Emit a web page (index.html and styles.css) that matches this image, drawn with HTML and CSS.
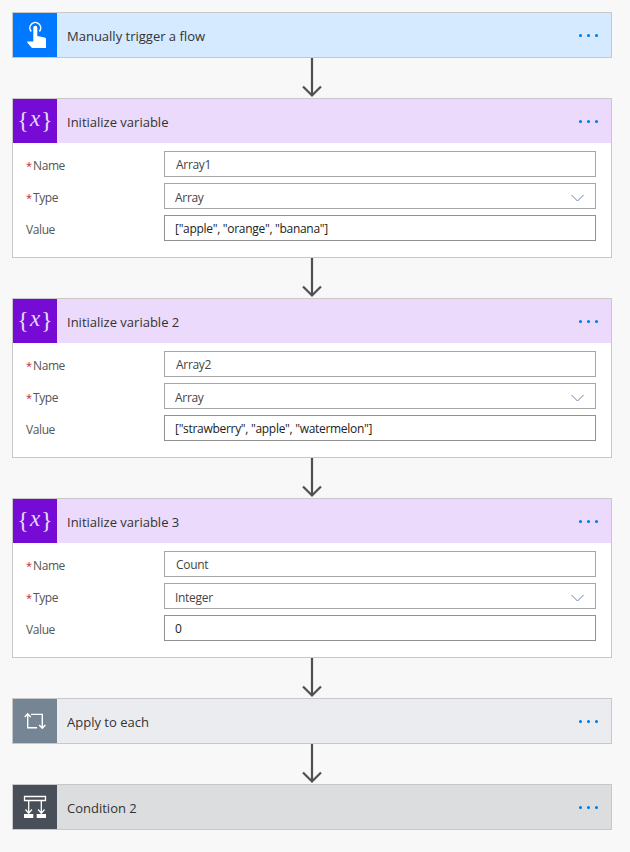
FILE: index.html
```html
<!DOCTYPE html>
<html lang="en">

<head>
    <meta charset="UTF-8">
    <title>Flow</title>
    <link rel="stylesheet" href="styles.css">
</head>

<body>
    <div class="flow">

        <div class="card trigger">
            <div class="head">
                <div class="icon">
                    <svg width="44" height="44" viewBox="0 0 44 44">
                        <path d="M18.2 18.4a5.4 5.4 0 1 1 8.2 0" fill="none" stroke="#fff" stroke-width="1.6" />
                        <path d="M20.3 14.8a2 2 0 0 1 4 0V23L31.5 24.5c.9.2 1.5.8 1.5 1.7V35H19L14.2 29.5V28.6H20.3z" fill="#fff" />
                    </svg>
                </div>
                <span class="title">Manually trigger a flow</span>
                <div class="dots"><span></span><span></span><span></span></div>
            </div>
        </div>
        <div class="line"><svg width="20" height="40" viewBox="0 0 20 40"><path d="M10 0V38M1 28.5L10 37.5L19 28.5" /></svg></div>

        <div class="card variable">
            <div class="head">
                <div class="icon"><span class="curly">{</span><span class="ex">x</span><span class="curly">}</span></div>
                <span class="title">Initialize variable</span>
                <div class="dots"><span></span><span></span><span></span></div>
            </div>
            <div class="body">
                <div class="row">
                    <label><i>*</i>Name</label>
                    <div class="field">Array1</div>
                </div>
                <div class="row">
                    <label><i>*</i>Type</label>
                    <div class="field select">Array
                        <svg class="chev" width="13" height="8" viewBox="0 0 13 8"><path d="M.5 1L6.5 7L12.5 1" /></svg>
                    </div>
                </div>
                <div class="row">
                    <label>Value</label>
                    <div class="field dark">["apple", "orange", "banana"]</div>
                </div>
            </div>
        </div>
        <div class="line"><svg width="20" height="40" viewBox="0 0 20 40"><path d="M10 0V38M1 28.5L10 37.5L19 28.5" /></svg></div>

        <div class="card variable">
            <div class="head">
                <div class="icon"><span class="curly">{</span><span class="ex">x</span><span class="curly">}</span></div>
                <span class="title">Initialize variable 2</span>
                <div class="dots"><span></span><span></span><span></span></div>
            </div>
            <div class="body">
                <div class="row">
                    <label><i>*</i>Name</label>
                    <div class="field">Array2</div>
                </div>
                <div class="row">
                    <label><i>*</i>Type</label>
                    <div class="field select">Array
                        <svg class="chev" width="13" height="8" viewBox="0 0 13 8"><path d="M.5 1L6.5 7L12.5 1" /></svg>
                    </div>
                </div>
                <div class="row">
                    <label>Value</label>
                    <div class="field dark">["strawberry", "apple", "watermelon"]</div>
                </div>
            </div>
        </div>
        <div class="line"><svg width="20" height="40" viewBox="0 0 20 40"><path d="M10 0V38M1 28.5L10 37.5L19 28.5" /></svg></div>

        <div class="card variable">
            <div class="head">
                <div class="icon"><span class="curly">{</span><span class="ex">x</span><span class="curly">}</span></div>
                <span class="title">Initialize variable 3</span>
                <div class="dots"><span></span><span></span><span></span></div>
            </div>
            <div class="body">
                <div class="row">
                    <label><i>*</i>Name</label>
                    <div class="field">Count</div>
                </div>
                <div class="row">
                    <label><i>*</i>Type</label>
                    <div class="field select">Integer
                        <svg class="chev" width="13" height="8" viewBox="0 0 13 8"><path d="M.5 1L6.5 7L12.5 1" /></svg>
                    </div>
                </div>
                <div class="row">
                    <label>Value</label>
                    <div class="field dark">0</div>
                </div>
            </div>
        </div>
        <div class="line"><svg width="20" height="40" viewBox="0 0 20 40"><path d="M10 0V38M1 28.5L10 37.5L19 28.5" /></svg></div>

        <div class="card loop">
            <div class="head">
                <div class="icon">
                    <svg width="44" height="44" viewBox="0 0 44 44" fill="none" stroke="#fff" stroke-width="1.4">
                        <path d="M11.7 18L14.7 14.8L17.7 18M14.7 15V28.7H24" />
                        <path d="M18 15.4H29.3V29M26.2 26L29.3 29.2L32.4 26" />
                    </svg>
                </div>
                <span class="title">Apply to each</span>
                <div class="dots"><span></span><span></span><span></span></div>
            </div>
        </div>
        <div class="line"><svg width="20" height="40" viewBox="0 0 20 40"><path d="M10 0V38M1 28.5L10 37.5L19 28.5" /></svg></div>

        <div class="card condition">
            <div class="head">
                <div class="icon">
                    <svg width="44" height="44" viewBox="0 0 44 44">
                        <path d="M11.5 11.5H32.5V15.5H11.5ZM15.7 16V28M12.5 24.5L15.7 28.3L18.9 24.5M28.3 16V28M25.1 24.5L28.3 28.3L31.5 24.5" fill="none" stroke="#fff" stroke-width="1.3" />
                        <path d="M11 29H20.3V33H11ZM23.7 29H33V33H23.7Z" fill="#fff" />
                    </svg>
                </div>
                <span class="title">Condition 2</span>
                <div class="dots"><span></span><span></span><span></span></div>
            </div>
        </div>

    </div>
</body>

</html>
```

FILE: styles.css
```css
body {
    margin: 0;
    background-color: rgb(248, 248, 248);
    font-family: "Open Sans", sans-serif;
    color: rgb(51, 51, 51);
}

.flow {
    width: 600px;
    padding: 12px 0 22px 12px;
}

.card {
    border: 1px solid rgb(200, 200, 200);
    background-color: white;
}

.head {
    display: flex;
    align-items: center;
    height: 44px;
}

.icon {
    display: flex;
    align-items: center;
    justify-content: center;
    width: 44px;
    height: 44px;
    color: white;
}

.title {
    margin: 2px 0 0 10px;
    font-size: 13px;
    flex: 1;
}

.dots {
    display: flex;
    gap: 5px;
    margin: 1px 13px 0 0;
}

.dots span {
    width: 3px;
    height: 3px;
    border-radius: 50%;
    background-color: rgb(0, 120, 215);
}

.trigger .head {
    background-color: rgb(213, 233, 255);
}

.trigger .icon {
    background-color: rgb(0, 120, 255);
}

.variable .head {
    background-color: rgb(235, 218, 251);
}

.variable .icon {
    background-color: rgb(119, 11, 214);
}

.loop .head {
    background-color: rgb(235, 236, 239);
}

.loop .icon {
    background-color: rgb(118, 133, 148);
}

.condition .head {
    background-color: rgb(220, 221, 222);
}

.condition .icon {
    background-color: rgb(72, 79, 88);
}

.curly {
    font-family: "Liberation Serif", serif;
    font-size: 24px;
    line-height: 1;
    margin-top: -3px;
    color: rgba(255, 255, 255, 0.85);
}

.ex {
    font-family: "Liberation Serif", serif;
    font-style: italic;
    font-size: 23px;
    line-height: 1;
    margin: -6px 1px 0 1px;
    color: rgba(255, 255, 255, 0.85);
}

.body {
    display: flex;
    flex-direction: column;
    gap: 6px;
    padding: 8px 15px 16px 13px;
}

.row {
    display: flex;
    align-items: center;
}

label {
    width: 138px;
    margin-top: 2px;
    font-size: 12px;
    letter-spacing: -0.4px;
    color: rgb(85, 85, 85);
}

label i {
    display: inline-block;
    width: 7px;
    font-style: normal;
    font-size: 11px;
    color: rgb(200, 40, 40);
}

.field {
    position: relative;
    flex: 1;
    height: 26px;
    box-sizing: border-box;
    border: 1px solid rgb(166, 166, 166);
    padding-left: 11px;
    font-size: 12px;
    letter-spacing: -0.3px;
    line-height: 26px;
    color: rgb(68, 68, 68);
}

.field.select {
    padding-left: 10px;
    line-height: 27px;
}

.field.dark {
    padding-left: 10px;
    border-color: rgb(145, 145, 145);
    color: rgb(34, 34, 34);
}

.chev {
    position: absolute;
    right: 11px;
    top: 10px;
    fill: none;
    stroke: rgb(105, 135, 170);
    stroke-width: 1;
}

.line {
    display: flex;
    justify-content: center;
    height: 40px;
}

.line path {
    fill: none;
    stroke: rgb(80, 80, 80);
    stroke-width: 2.2;
}
```
